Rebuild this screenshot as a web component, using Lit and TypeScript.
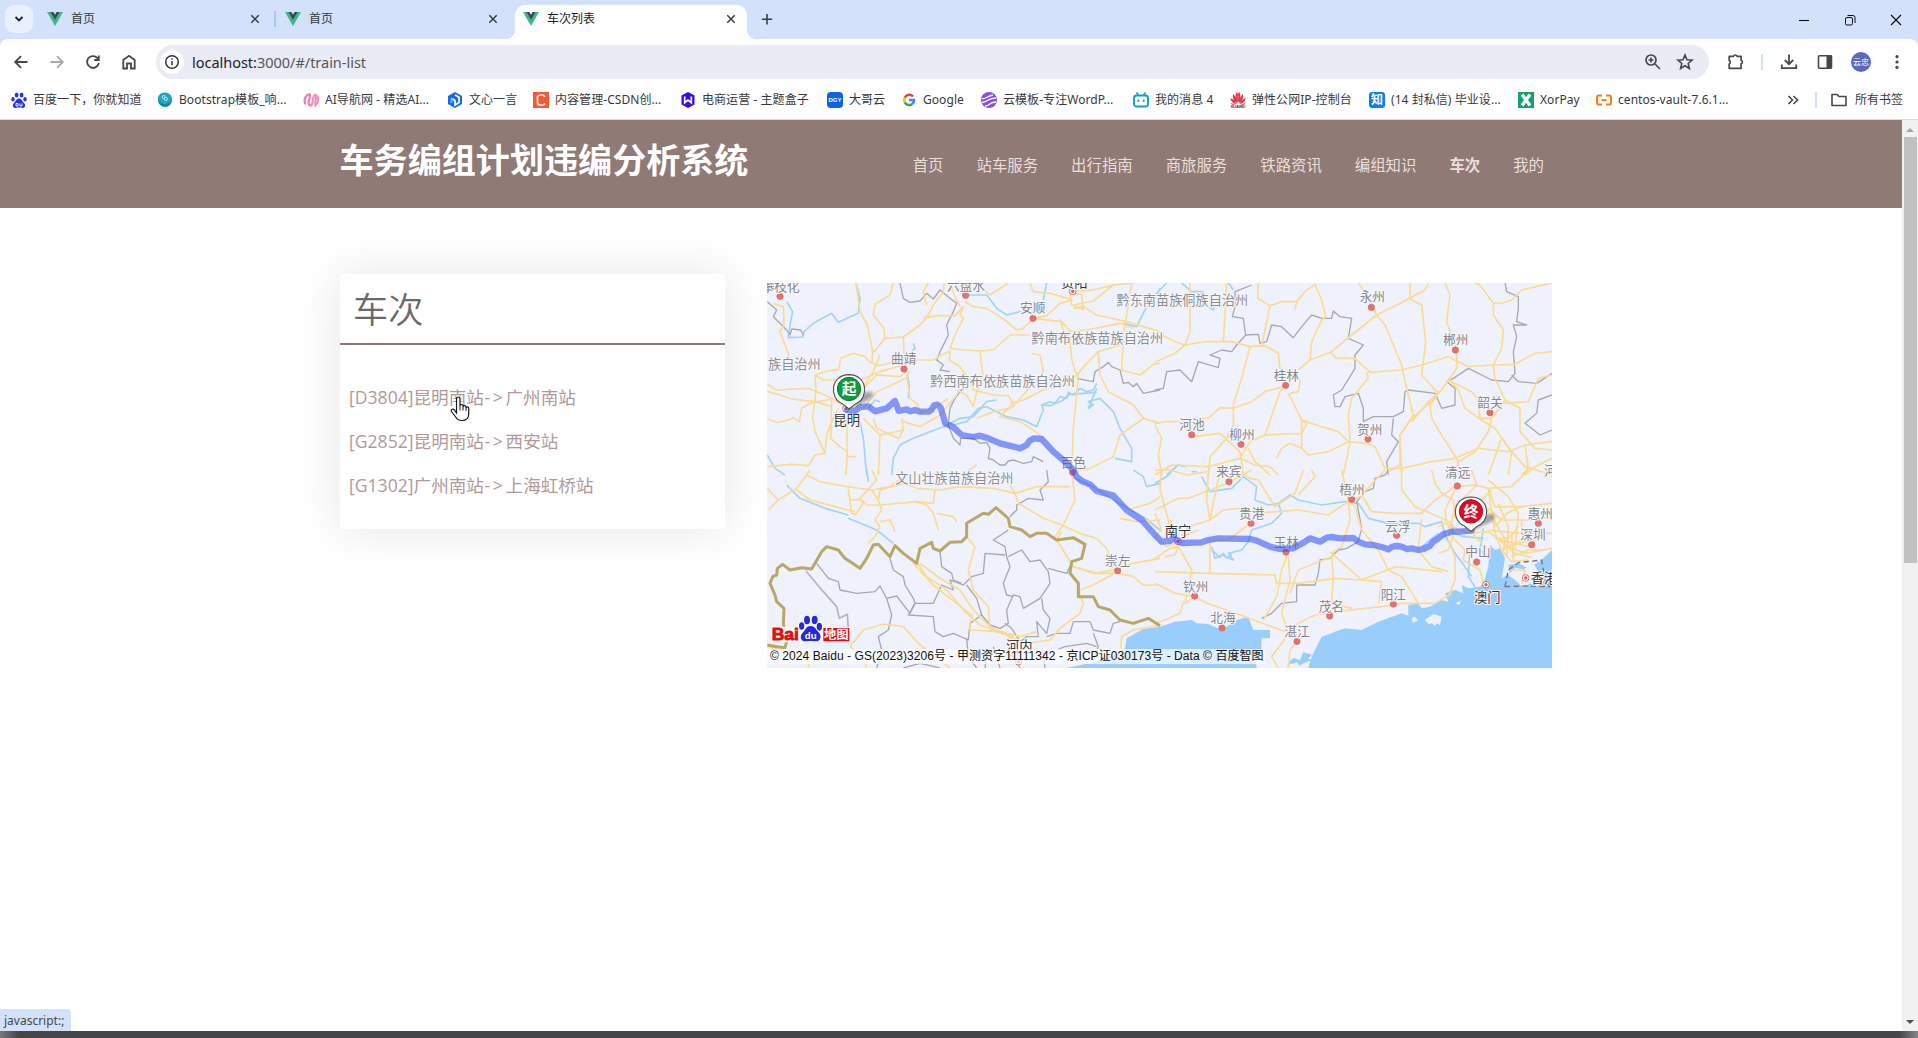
import { LitElement, html, svg, css } from "lit";
import { customElement } from "lit/decorators.js";

const vue = svg`<path d="M0 1h3.6L8 8.6 12.4 1H16L8 15z" fill="#41b883"/><path d="M3.4 1h3L8 3.8 9.6 1h3L8 9z" fill="#35495e"/>`;
const paw = svg`<g fill="#2932e1"><ellipse cx="5.6" cy="3" rx="1.9" ry="2.6"/><ellipse cx="10.6" cy="3" rx="1.9" ry="2.6"/><ellipse cx="2" cy="7.2" rx="1.7" ry="2.3"/><ellipse cx="14" cy="7.2" rx="1.7" ry="2.3"/><path d="M8 6.5c2.500 0 3 2.500 5 4.500s1.200 5-1.500 5c-1.500 0-2-.4-3.500-.4s-2 .4-3.500.4C1.800 16 1 13 3 11s2.500-4.500 5-4.500z"/></g><path d="M5 11.500h2v2.500H5zM9 11.500v2.500h2v-2.500" fill="none" stroke="#fff" stroke-width=".9"/>`;

const icons: Record<string, unknown> = {
  paw,
  boot: svg`<circle cx="8" cy="8" r="7" fill="#0d87a5"/><path d="M1 5.500A7.300 7.300 0 0 1 15 6c-1 4-4 6-7.500 6S2 9.500 1 5.500z" fill="#22a5bd"/><g fill="none" stroke="#b6f0fa" stroke-width=".9"><circle cx="6.700" cy="5" r="1.600"/><circle cx="8.800" cy="7" r="1.600"/></g>`,
  ai: svg`<g fill="none" stroke-width="2.200" stroke-linecap="round"><path d="M2.200 11.500C.5 7 3 3 6 2.200c2 0 .3 4-.3 7-.4 3 .5 4.500 2.300 4.300" stroke="#f07ab4"/><path d="M8 13.500c2-1 1.500-4 2-7 .6-4 3.600-5 3.200-2 0 3-1.500 6-.8 9 2.600-2 3.300-6 2.200-9" stroke="#f58fbd"/></g>`,
  yiyan: svg`<path d="M8 0l7 4v8l-7 4-7-4V4z" fill="#1768e5"/><path d="M8 3l4 2.300v5.200L8 13V8.500L4.500 6.500" fill="none" stroke="#fff" stroke-width="1.700"/><path d="M4.500 6v5" stroke="#49c4ff" stroke-width="2"/>`,
  csdn: svg`<path d="M0 0h16v16H0z" fill="#fc5531"/><path d="M11.500 5V4Q11 3 8 3T4.500 5v6q0 2 3.500 2t3.500-1v-1" fill="none" stroke="#fff" stroke-width="1.700"/>`,
  box: svg`<path d="M8 0l6.500 3.500v9L8 16l-6.500-3.500v-9z" fill="#3909ea"/><path d="M4.700 4.500v6.200L8 8l3.300 2.700V4.500" fill="none" stroke="#fff" stroke-width="1.700"/>`,
  dgy: svg`<rect width="16" height="16" rx="4" fill="#0964e4"/><text x="8" y="10.200" text-anchor="middle" font-family="Liberation Sans" font-weight="700" font-size="6" fill="#fff">DGY</text>`,
  google: svg`<g fill="none" stroke-width="2.500"><path d="M12 4.500A5 5 0 0 0 3.700 5.700" stroke="#ea4335"/><path d="M3.700 5.700a5 5 0 0 0 0 4.600" stroke="#fbbc05"/><path d="M3.700 10.300A5 5 0 0 0 11.300 12" stroke="#34a853"/><path d="M11.300 12A5 5 0 0 0 13 8H8" stroke="#4285f4"/></g>`,
  cloud: svg`<circle cx="8" cy="8" r="8" fill="#864eea"/><path d="M1 6.500c4 1 5-2.500 11-3.500M1 10.500c6 0 5-4.500 14-4.500M4 14c5 0 4-4 11-4" fill="none" stroke="#fff" stroke-width="1.300"/>`,
  bili: svg`<rect x="1" y="3.500" width="14" height="11" rx="2.500" fill="#fff" stroke="#139fc6" stroke-width="1.900"/><path d="M3.500.5l2 3M12.500.5l-2 3M5.300 7.500v2.500M10.700 7.500v2.500" stroke="#139fc6" stroke-width="1.700"/>`,
  huawei: svg`<g fill="#e43b4c"><path d="M7.600 11C5 6 5 2 7 0c1.500 2 1.500 6 .6 11zM8.400 11C11 6 11 2 9 0 7.500 2 7.500 6 8.400 11zM7 11.500C3.500 8.500 2 5 3.200 2 5.500 4 6.700 7.500 7 11.500zM9 11.500c3.500-3 5-6.500 3.800-9.500C10.500 4 9.300 7.500 9 11.500zM6.500 12C3 11.500.5 9 .5 6c3 1 5 3.500 6 6zM9.500 12c3.500-.5 6-3 6-6-3 1-5 3.500-6 6zM6 12.700H2C1 12 1 11 1 11zM10 12.700h4c1-.7 1-1.700 1-1.700z"/></g><text x="8" y="16" text-anchor="middle" font-family="Liberation Sans" font-size="3.600" font-weight="700" fill="#333">HUAWEI</text>`,
  zhi: svg`<rect width="16" height="16" rx="3" fill="#0d7ff2"/><text x="8" y="12.300" text-anchor="middle" font-family="Noto Sans CJK SC" font-weight="700" font-size="12" fill="#fff">知</text>`,
  xor: svg`<path d="M0 0h16v16H0z" fill="#17a26b"/><path d="M4 2.500l8 11M12 2.500l-8 11" stroke="#fff" stroke-width="3.200"/>`,
  ali: svg`<path d="M6 3.500H3Q1 3.500 1 5.500v5q0 2 2 2h3M10 3.500h3q2 0 2 2v5q0 2-2 2h-3M5.500 8h5" fill="none" stroke="#ff7a13" stroke-width="2"/>`,
  folder: svg`<path d="M1 13.500v-11h5l2 2h7v9z" fill="none" stroke="#45474a" stroke-width="1.600" stroke-linejoin="round"/>`,
};
const icon = (n: string) => html`<svg class="i16" viewBox="0 0 16 16">${icons[n]}</svg>`;

const bookmarks: [string, string][] = [
  ["paw", "百度一下，你就知道"], ["boot", "Bootstrap模板_响..."], ["ai", "AI导航网 - 精选AI..."],
  ["yiyan", "文心一言"], ["csdn", "内容管理-CSDN创..."], ["box", "电商运营 - 主题盒子"],
  ["dgy", "大哥云"], ["google", "Google"], ["cloud", "云模板-专注WordP..."],
  ["bili", "我的消息 4"], ["huawei", "弹性公网IP-控制台"], ["zhi", "(14 封私信) 毕业设..."],
  ["xor", "XorPay"], ["ali", "centos-vault-7.6.1..."],
];

const glyph = (w: number, body: unknown) => html`<svg class="glyph" width=${w} height=${w} viewBox="0 0 20 20">${body}</svg>`;
const closeGlyph = html`<svg class="close" width="16" height="16" viewBox="0 0 16 16"><path d="M4.300 4.300l7.400 7.400M11.700 4.300l-7.400 7.400" stroke="#3a3c40" stroke-width="1.500"/></svg>`;

/* Map geometry is kept per tile; each tile is 1185 x 585 units, three units to a pixel. */
type Tile = { x: number; y: number; roads: string[]; rivers: string[]; borders: string[] };
const tiles: Tile[] = [
  { x: 0, y: 0,
    roads: [
      "288 24 300 110 322 150 338 230 336 262", "400 24 390 60 345 88 340 120 372 160 375 190 345 228 338 230",
      "375 190 430 186 480 150 500 128 520 90 550 50 552 24", "490 128 540 122 585 122 610 95", "430 186 432 232 440 270",
      "58 165 75 210 90 250", "40 85 70 95 72 150 60 170", "22 328 50 345 145 340 175 352 215 370 260 400",
      "22 350 55 358 95 372 165 380 215 395", "22 432 50 442 75 438 100 428 118 440 125 400 150 385 215 372",
      "165 300 200 288 235 284 242 250 280 235 315 245 330 262 360 272 420 255 520 255 545 240 570 228",
      "165 300 168 350 158 430 165 470 195 535 200 480 215 440 235 400", "195 535 165 540 145 572 95 568 22 575",
      "215 375 212 490 240 515 262 530 258 600", "260 430 262 545 288 545", "290 400 300 350 330 320 350 300 420 305 438 290",
      "310 400 350 350 395 330 440 308 448 290", "440 300 450 370 470 385 485 415", "360 240 340 290 310 335 300 400",
      "165 300 190 315 300 315 360 290 430 270", "610 95 600 120 610 130 585 180 570 220 610 225 660 228 700 225 750 180 810 180",
      "615 80 640 95 680 100 735 135 770 165 790 160 820 130 860 122 900 85 935 75", "570 228 568 256 600 275 625 310 640 345 700 360 745 362 760 385 720 425 780 440 820 465 850 490",
      "660 228 668 300 650 350 640 395 620 360 590 345", "900 130 910 170 930 200 935 250 945 290 955 300 940 460 935 600",
      "940 75 870 55 820 50 810 24", "930 50 1000 45 1060 30", "940 90 1000 78 1060 30 1120 24", "940 100 970 95 1010 120 1100 140 1200 170",
      "820 130 905 140 930 168 980 165 1080 145 1120 160", "430 440 480 455 540 420 590 360", "360 480 355 600", "310 430 360 480 430 465 425 430",
      "340 430 350 460 415 490 430 465", "750 385 790 375 850 345 910 330 950 300 980 265 1015 230 1080 210 1090 180 1115 24",
      "815 235 840 240 850 290 790 360 755 400", "1015 230 1020 300 1045 350 1120 390 1150 430 1200 445", "1150 430 1080 480 1060 545 990 580 930 590",
      "1090 190 1085 285 1140 300 1180 268 1200 265", "565 370 520 400 480 415", "500 90 490 50 505 24", "600 95 585 65 570 24",
      "650 24 690 60 745 24", "930 50 935 90 970 105 965 60 935 50", "930 168 920 195 1010 185 1100 190", "750 400 700 410 650 430", "620 590 650 570",
    ],
    rivers: ["80 80 98 110 90 150 85 188 128 186 132 170 160 145 215 115 235 142 295 115 300 70 288 24", "620 60 680 60 710 100 740 120 780 110 790 120", "860 24 850 75",
      "22 540 45 580 75 600", "300 440 310 490 320 600", "395 600 400 550 420 510 460 490 550 455 600 430 640 425 680 380 710 375", "360 380 345 375 325 400",
      "445 370 448 330 442 300", "460 205 465 220 455 230", "580 450 620 440 655 400 680 395 740 425 790 435 830 455 850 405 845 390 870 380 885 385 900 365 920 370 925 352 940 360 960 340 980 350 1000 345 1010 325",
      "1010 340 985 400 1000 390 985 380 1020 370 1060 410 1080 460 1115 520 1115 560 1065 550", "845 390 870 392 905 378 930 358 1010 352", "1160 95 1130 155 1090 145", "1200 40 1180 80"],
    borders: ["22 80 50 105 40 125 60 145 80 165 90 180 95 162 122 165 130 180", "420 24 430 70 450 82 480 78 500 55 520 72 540 45 570 70 590 85 580 110 560 150 565 180 545 220 530 255 550 270 540 285 570 290",
      "615 335 600 350 585 370 570 400 565 450 580 490 600 510 602 490 640 490 660 505 680 502 690 520 685 550 700 555 720 570 735 570 745 558 760 555 790 565 815 560 820 545 850 560",
      "950 310 1000 320 1005 290 1030 275 1045 262 1055 275 1080 285 1090 325 1105 322 1120 335 1130 325 1150 355 1200 345"] },
  { x: 1185, y: 0,
    roads: [
      "105 24 105 170 90 210 60 235 0 262", "20 180 60 200 90 210 150 200 230 200 285 215 330 212 370 235 375 280", "215 24 210 120 205 200",
      "310 24 308 70 345 92 330 165 320 212", "345 92 380 80 425 80 450 50 480 28 500 75 512 125 500 135 470 200 465 255 430 285",
      "425 80 420 105", "465 255 530 230 590 180 665 120 745 80 810 45 820 24", "610 24 625 45 665 120 690 150 740 270 750 320 775 420 735 480 740 600",
      "525 230 545 250 600 250 645 292 740 285 800 270 880 245 940 275 1015 270 1080 268 1140 235 1191 230", "765 24 765 72 800 90 812 200 800 300 850 355",
      "870 24 885 60 875 140 905 225 905 280 860 345 820 380 770 440", "960 24 975 30 1015 85 1015 120 1045 165 1040 220 1015 270 1020 310 1050 375 1095 400 1095 470 1140 520 1191 525",
      "1191 24 1100 45 1070 75 1040 85 1015 85", "285 215 260 310 235 390 235 450 215 490 165 545 160 600", "385 335 375 350 330 480 285 500 255 550",
      "385 335 330 350 290 380 235 400 195 398 160 430 130 430", "400 355 440 435 500 455 550 470 580 500 635 505 660 515 690 580 740 580 830 560 900 550 970 520 1060 530 1110 510 1191 500",
      "405 355 430 350 435 320 420 290", "0 445 35 440 75 440 115 485 195 475 255 530 265 600", "330 480 440 475 455 445 440 435 440 520 460 540 520 530 580 500",
      "0 450 20 490 10 540 20 600", "440 520 405 505 380 520 365 550", "635 292 640 310 590 370 580 420 585 500 565 600",
      "850 355 825 390 830 430 860 480 905 550 920 600", "880 310 910 345 930 400 980 435 1020 460 1070 530 1110 575 1191 600", "1050 375 1010 430 1000 470 960 530 910 560 900 600",
      "890 320 950 350 975 380 1050 385 1120 380 1150 310 1191 300", "255 550 300 570 345 575 370 600", "0 600 50 570 160 575 255 550", "1000 600 1040 490 1070 530 1060 600",
      "700 590 735 570 735 480 770 430 840 370", "970 385 975 430 1010 430", "280 520 300 560 345 600", "1110 510 1120 580 1100 600", "1191 550 1140 575 1110 600"],
    rivers: ["0 60 35 24", "80 24 110 50 145 50 130 75", "150 90 175 105 180 90", "35 600 70 570 90 575", "220 24 235 45", "110 590 125 590"],
    borders: ["290 30 265 40 240 50 240 95 232 125 265 130 272 180 245 210 230 230 200 225 165 240 195 250 190 278 130 260 110 320 75 285 35 290 25 340 0 345",
      "270 180 310 178 315 205 335 200 350 150 380 155 415 188 440 155 470 120 500 130 530 130 535 108 555 125 590 130 580 190 625 210 600 240 600 280 560 345 535 360 540 395 555 395 570 365 610 355 625 400 625 440 655 425 715 425 745 410 750 350 760 345 840 355 860 400 900 390 900 340 875 320 895 310 940 280 980 300 1010 315 1060 320 1080 295 1075 230 1085 185 1075 150 1115 150 1085 140 1090 100 1090 65 1055 50 1050 24",
      "1070 300 1090 320 1145 325 1191 295", "715 430 710 480 730 500 695 560 700 600", "1191 360 1150 375 1145 415 1110 445 1155 480 1191 465"] },
  { x: 0, y: 585,
    roads: ["22 55 55 90 25 120", "55 90 110 55 140 15 150 0", "110 60 150 90 225 110 285 125", "140 15 180 35 260 50 335 60 355 90 360 60 430 40 470 55 540 60 600 50 700 55 765 70",
      "265 55 270 90 300 88 310 100 285 135 275 130 265 60", "355 90 365 120 345 150 360 170 345 200 325 220", "360 155 390 150 405 185", "335 0 350 30 300 85 320 105 360 105", "360 105 470 95 520 100 525 60",
      "465 95 500 105 520 130 535 180", "530 130 580 140 590 155", "735 20 765 70 775 100 850 145 905 165 960 190 1010 205 1040 235 1060 295", "935 0 945 90 910 165 885 200",
      "905 185 890 210 940 290 1000 310 1060 300 1120 280 1200 265", "940 290 1010 310 1065 310 1000 345 960 360", "1080 310 1120 320 1150 345 1200 345", "470 275 500 320 560 360 620 430 660 465 740 490 760 520",
      "480 280 540 325 600 360 640 420 690 470 780 515", "460 280 520 345 590 400 640 440", "620 200 645 230 625 300 640 360 685 410 690 480 760 500", "270 530 310 480 370 462 430 470 475 520 570 594",
      "22 530 60 540 100 555", "955 360 970 400 960 430 900 475 870 510 800 520", "1080 560 1085 500 1120 480 1200 465", "1080 145 1130 155 1200 150", "1100 120 1170 100 1200 80", "150 540 145 594", "270 530 310 560 320 594",
      "335 60 390 50 430 20", "630 450 630 480 720 485 780 500 830 485", "765 70 830 50 930 50"],
    rivers: ["80 45 120 85 195 115 265 135", "265 145 350 180 400 220", "320 0 325 35", "1120 0 1150 20 1160 50 1200 40", "935 20 1000 50 1060 90 1150 140 1200 180"],
    borders: ["860 0 865 35 840 60 850 90 805 85 770 105 770 120 750 140", "170 280 205 325 235 335 240 360 290 370 345 365 360 348 380 385 410 378 450 430 465 400 520 400 545 345 580 360 570 330 610 345 635 320 670 310 675 250 735 255",
      "390 265 400 300 430 320 435 345 460 385 465 400", "540 245 545 290 575 310 580 330 605 340", "380 385 395 435 385 480 355 500 365 540 350 594", "465 400 445 435 520 440 525 485 550 500 580 490 625 510 630 460 665 435 690 465 720 475 745 460 740 420 760 375 780 380 790 415 840 385 870 340 865 305 840 270 810 275 785 240 745 260",
      "745 180 700 210 735 230 740 260 750 290 730 340 740 375 760 380", "620 345 650 385 665 435", "865 295 920 310 935 280", "845 385 850 420 870 445 860 490 830 455 835 500 800 500 780 515 755 475 735 460", "620 505 625 560 650 594", "860 500 890 490 930 490 940 455 990 455 1000 480 1050 490 1060 460 1080 455",
      "1000 490 1015 530 1000 570", "890 540 915 530 980 520 1010 530", "700 530 720 594", "850 540 855 594", "430 594 480 580 540 594", "675 594 680 550 720 540 760 560 780 594"] },
  { x: 1185, y: 585,
    roads: ["0 200 35 230 65 220 100 170 165 150 205 120 250 115 285 125", "20 0 15 60 40 150 45 200", "160 0 155 90 165 150 195 0", "0 120 70 85 100 85 165 60 215 40 290 0",
      "245 0 285 25 310 30 360 110 420 70 445 0", "430 75 480 20 470 0", "285 160 220 210 165 210 165 310 0 305", "65 220 110 300 90 400 120 380", "165 310 360 315 365 340 430 340 540 325 620 330 720 290 860 305",
      "400 245 380 300 365 380 325 450", "400 260 405 330 380 430 400 490", "120 380 155 400 200 415 270 440 350 470 405 490 430 460 480 435 585 420 680 410 740 400 840 400 890 370",
      "0 265 45 235 70 230 60 255 30 260", "120 380 60 370 0 340", "85 395 75 430 30 450 0 460", "430 120 520 135 580 95 615 80 690 0", "580 95 585 150 560 230 530 250 535 320 530 400 590 415",
      "560 0 580 90 600 110 620 180 670 240 700 300 740 320 790 400", "620 75 650 125 720 130 800 130 840 90 880 65 905 45", "740 0 740 60 780 110 850 140 890 160", "800 145 790 240 830 290 880 305",
      "905 50 870 120 875 160 895 200 880 240 850 250", "905 50 960 45 1000 55 1070 50 1120 0", "1000 55 1020 110 1100 110 1191 100", "950 0 965 45 900 110 880 200", "830 0 840 40 860 70 895 90 900 145", "850 170 870 160 940 190 1000 185 1060 230 1110 250 1191 235",
      "1000 60 1020 190 1040 240 1070 275 1120 270", "1000 115 1040 150 1130 150 1191 140", "1020 170 1055 130 1100 110", "1000 180 1090 190 1191 190", "1020 205 1120 230 1160 190", "1040 240 1100 210 1100 150", "890 200 930 240 925 270 975 300 985 340",
      "880 210 900 260 900 330 880 380", "1000 30 1060 80 1090 130 1080 240", "1030 100 1060 170 1055 260", "1010 60 980 90 1010 145 1020 170", "1025 205 1060 205 1090 170", "1070 260 1120 240 1160 240", "1050 230 1130 210", "1060 300 1110 300 1100 340",
      "1015 145 1035 185 1050 205 1045 245", "1070 190 1075 270", "1040 215 1080 250 1130 262", "960 100 940 150 960 200 1000 240",
      "300 130 430 120", "525 245 620 330 680 335 670 400", "405 490 440 500 405 540 400 594", "400 490 380 520 350 560 370 594", "530 260 430 300 405 370", "0 200 20 180 0 130", "45 150 60 210 130 180", "0 0 40 0 100 15 155 5"],
    rivers: ["0 40 35 20 55 0", "140 20 165 65 230 55 265 20 305 50 300 90 340 105 370 100 380 130 350 160 290 180 280 215 260 240 220 250 235 270 200 255 180 265 170 230", "170 240 195 262 205 250 215 265 230 252", "370 100 405 75 430 90 500 105 570 95 610 100 640 145 700 160 790 160 810 170 860 155 870 195 900 250 930 290 950 320",
      "800 230 850 190", "985 175 975 240 1000 260", "945 230 940 320 960 350", "890 160 895 190 925 200 985 205"],
    borders: ["700 0 690 15 660 25 655 55 630 65 605 95 620 175 610 215 575 235 550 240 525 265 495 270 490 310 480 345 425 345 425 395 380 400 350 430 320 445"] },
];

const labels: [string, number, number, string?][] = [
  ["攀枝化", 62, 49], ["六盘水", 618, 46], ["贵阳", 943, 35, "major"], ["安顺", 818, 112], ["黔东南苗族侗族自治州", 1267, 89, "area"],
  ["黔南布依族苗族自治州", 1012, 205, "area"], ["曲靖", 431, 263], ["族自治州", 103, 283, "area"], ["黔西南布依族苗族自治州", 728, 333, "area"], ["昆明", 260, 449, "major"],
  ["百色", 940, 575], ["文山壮族苗族自治州", 583, 624, "area"], ["崇左", 1073, 870], ["河内", 778, 1127, "major"],
  ["永州", 1837, 79], ["郴州", 2087, 207], ["桂林", 1579, 314], ["河池", 1296, 461], ["柳州", 1446, 492], ["贺州", 1829, 477], ["韶关", 2190, 397],
  ["来宾", 1407, 604], ["清远", 2093, 605], ["河源", 2390, 601], ["梧州", 1776, 657], ["贵港", 1475, 728], ["云浮", 1914, 767], ["惠州", 2341, 728], ["深圳", 2319, 793],
  ["南宁", 1254, 782, "major"], ["玉林", 1579, 815], ["中山", 2154, 844], ["钦州", 1307, 947], ["阳江", 1900, 972], ["茂名", 1714, 1008], ["北海", 1389, 1042], ["湛江", 1611, 1083],
  ["香港", 2352, 924, "major"], ["澳门", 2182, 980, "major"],
];
const dots: [number, number][] = [[60, 64], [617, 61], [819, 130], [432, 282], [938, 592], [1073, 887], [1834, 97], [2086, 225], [1577, 331], [1295, 479], [1443, 508], [1824, 492], [2190, 413], [1407, 620], [2092, 633], [1775, 673], [1473, 745], [1910, 781], [2335, 745], [2315, 809], [1578, 831], [2150, 861], [1304, 963], [1900, 987], [1709, 1023], [1386, 1059], [1611, 1099]];
const capitals: [number, number][] = [[938, 49], [258, 401], [1254, 799], [2178, 929], [2297, 909], [775, 1160]];
const routePts = "262 405 285 408 300 396 325 394 345 409 380 400 405 378 416 408 440 403 450 409 465 405 480 410 505 410 515 404 522 391 532 389 542 398 556 445 578 455 605 480 640 486 660 482 685 490 720 505 780 520 800 510 808 498 822 490 845 492 880 530 915 560 940 585 950 605 965 618 990 628 1010 648 1060 662 1100 705 1145 735 1185 780 1205 800 1230 798 1240 790 1265 804 1325 802 1345 795 1375 790 1470 792 1490 797 1530 815 1560 822 1600 820 1635 800 1650 790 1680 800 1700 788 1715 786 1740 790 1780 789 1795 800 1815 808 1840 810 1865 816 1885 823 1897 815 1910 813 1925 815 1940 822 1955 820 1975 825 1990 822 2008 814 2020 800 2032 792 2050 778 2075 770 2100 770 2135 766";

const pin = (x: number, y: number, fill: string, rim: string, text: string) => svg`<g transform="translate(${x} ${y})">
  <path d="M0 0C20-20 20-50 65-52 85-45 60-25 35-18z" fill="#555" opacity=".5" filter="url(#soft)"/>
  <path d="M0 0L-20-16C-60-32-57-102 0-103 57-102 60-32 20-16z" fill="#fff" stroke="#555" stroke-width="3.500"/>
  <circle cx="0" cy="-60" r="35" fill=${fill} stroke=${rim} stroke-width="3"/>
  <text class="pintext" x="0" y="-44" text-anchor="middle">${text}</text></g>`;

@customElement("train-map")
class TrainMap extends LitElement {
  static styles = css`
    :host { display: block; position: relative; width: 785px; height: 385px; overflow: hidden; }
    .map { display: block; }
    polyline, path { stroke-linejoin: round; }
    .road { fill: none; stroke: #fbdb8f; stroke-width: 5; }
    .river { fill: none; stroke: #a3d3f7; stroke-width: 5; }
    .border { fill: none; stroke: #a6a8b2; stroke-width: 4; }
    .label { font: 38px "Noto Sans CJK SC", sans-serif; fill: #85868b; stroke: #f7f8fd; stroke-width: 6; paint-order: stroke; text-anchor: middle; }
    .major { font-size: 40px; fill: #333; }
    .area { font-size: 39.5px; fill: #8d8e93; }
    .route { fill: none; stroke: #3050f8; stroke-opacity: .57; stroke-width: 19; stroke-linecap: round; }
    .pintext { font: 700 44px "Noto Sans CJK SC", sans-serif; fill: #fff; }
    .brand { font: 900 52px "Liberation Sans", sans-serif; fill: #e10c14; stroke: #e10c14; stroke-width: 2.5; }
    .copy { position: absolute; left: 0; bottom: 4px; height: 15px; padding: 0 1px 0 3px; background: rgba(255,255,255,.7); color: #111; font: 12px/15px "Liberation Sans", "Noto Sans CJK SC", sans-serif; letter-spacing: .065px; white-space: nowrap; }
  `;
  render() {
    const lines = (list: string[], cls: string) => list.map((p) => svg`<polyline class=${cls} points=${p}/>`);
    return html`<svg class="map" width="785" height="385" viewBox="21 24 2355 1155">
      <defs><filter id="soft" x="-50%" y="-50%" width="200%" height="200%"><feGaussianBlur stdDeviation="5"/></filter></defs>
      <rect x="21" y="24" width="2355" height="1155" fill="#eff2fc"/>
      <path fill="#99cdfb" d="M920 1179L1000 1162 1060 1140 1095 1120 1100 1090 1150 1062 1200 1055 1245 1040 1295 1035 1310 1045 1345 1047 1385 1065 1430 1035 1465 1025 1480 1065 1530 1065 1530 1090 1505 1090 1503 1135 1485 1145 1490 1179zM1645 1179L1655 1145 1675 1105 1685 1085 1715 1075 1730 1068 1755 1060 1805 1065 1855 1040 1925 1015 1945 1022 1945 990 1975 985 1985 1000 2010 995 2045 975 2065 980 2055 955 2085 945 2110 955 2105 930 2125 940 2160 935 2172 920 2185 875 2190 810 2205 825 2220 820 2235 850 2225 910 2250 895 2245 870 2275 865 2305 880 2330 865 2350 850 2376 825V1179z"/>
      <path fill="#99cdfb" d="M1580 1170l20-22 20 8 10-25 25 8-10 12 12 5-20 6-20 10-5-10z"/>
      <path fill="#eff2fc" d="M2245 900l20-22 25 5 30-18 15 25 25 20-30 25-20-10-20 13-25-23zM1955 1030l10-5 8 12-15 6zM1995 1035l25-18 25 8-5 25-10-5-5 8-10-8-10 3zM2085 985l18-8-5 13zM2140 978l12-6 5 10-10 2z"/>
      ${tiles.map((t) => svg`<g transform="translate(${t.x} ${t.y})">${lines(t.rivers, "river")}${lines(t.borders, "border")}${lines(t.roads, "road")}</g>`)}
      <path d="M2235 935l10-50 30-22 70-8 10 60 15 20-70-2z" fill="none" stroke="#777" stroke-width="4" stroke-dasharray="16 10"/>
      <polyline points="138 888 190 950 230 995 238 1030 262 1018 268 1100" fill="none" stroke="#b5b6b1" stroke-width="5"/>
      <polyline points="22 1110 50 1115 75 1118 80 1100 70 1045 72 1000 50 980 45 960 30 925 38 905 50 900 52 880 68 868 90 885 125 878 155 882 185 830 200 815 235 825 255 850 300 880 320 850 340 810 355 808 390 845 405 812 430 835 470 865 480 820 515 802 520 820 540 828 570 802 605 800 620 785 620 745 670 715 685 718 708 698 745 730 750 755 785 765 810 785 830 775 860 775 890 795 940 788 975 808 965 850 935 860 930 895 955 925 955 965 1000 965 1015 995 1050 1005 1080 1035 1120 1045 1165 1030 1200 1052" fill="none" stroke="#b9a765" stroke-width="9" stroke-linejoin="round"/>
      ${dots.map(([x, y]) => svg`<circle cx=${x} cy=${y} r="9.500" fill="#e87068" stroke="#c96a63" stroke-width="2"/>`)}
      ${capitals.map(([x, y]) => svg`<circle cx=${x} cy=${y} r="10" fill="#fff" stroke="#dc6e68" stroke-width="3"/><circle cx=${x} cy=${y} r="5" fill="#df5c55"/>`)}
      ${labels.map(([t, x, y, c]) => svg`<text class="label ${c ?? ""}" x=${x} y=${y}>${t}</text>`)}
      <polyline class="route" points=${routePts}/>
      ${pin(267, 402, "#0c9c3c", "#087b2f", "起")}
      ${pin(2133, 769, "#dc0c27", "#b40b20", "终")}
      <g transform="translate(0 585)">
        <rect x="33" y="470" width="240" height="47" rx="4" fill="#fff" opacity=".85"/>
        <text class="brand" x="35" y="511" textLength="82" lengthAdjust="spacingAndGlyphs">Bai</text>
        <g stroke="#fff" stroke-width="5" paint-order="stroke" fill="#2529d8"><ellipse cx="141" cy="450" rx="9" ry="13"/><ellipse cx="164" cy="450" rx="9" ry="13"/><ellipse cx="125" cy="468" rx="8" ry="11"/><ellipse cx="178" cy="470" rx="8" ry="12"/><path d="M152 468c14 0 16 12 25 20s5 26-9 26c-8 0-10-1-16-1s-8 1-16 1c-15 0-18-16-8-26s10-20 24-20z"/></g>
        <text x="152" y="507" text-anchor="middle" font-family="Liberation Sans" font-size="29" font-weight="700" fill="#fff">du</text>
        <rect x="190" y="474" width="78" height="40" fill="#e10c14"/>
        <text x="229" y="508" text-anchor="middle" font-family="Noto Sans CJK SC" font-weight="700" font-size="37" fill="#fff">地图</text>
      </g>
    </svg>
    <div class="copy">© 2024 Baidu - GS(2023)3206号 - 甲测资字11111342 - 京ICP证030173号 - Data © 百度智图</div>`;
  }
}

@customElement("browser-chrome")
class BrowserChrome extends LitElement {
  static styles = css`
    :host { display: block; height: 120px; box-sizing: border-box; background: #d3e1fb; border-bottom: 1px solid #dfdedd; color: #37393c; font: 12px/16px "Noto Sans", "Noto Sans CJK SC", sans-serif; }
    svg { display: block; flex: none; }
    .i16 { width: 16px; height: 16px; }
    .tabs { display: flex; height: 39px; padding-left: 5px; align-items: center; }
    .search { width: 28px; height: 28px; border-radius: 9px; background: #e9f0fd; display: grid; place-items: center; margin-top: -1px; }
    .tab { box-sizing: border-box; display: flex; flex: none; align-items: center; gap: 8px; padding: 0 8px; height: 34px; width: 232px; margin-bottom: -5px; padding-bottom: 6px; }
    .first { margin-left: 6px; width: 235px; padding-right: 11px; }
    .second { margin-left: 1px; width: 236px; padding-right: 12px; }
    .close { margin-left: auto; }
    .sep { width: 2px; height: 16px; margin-top: -1px; background: #a9c7f3; flex: none; }
    .active { margin-left: 2px; background: #fff; border-radius: 10px 10px 0 0; color: #1c1d1f; position: relative; }
    .active::before, .active::after { content: ""; position: absolute; bottom: 0; width: 10px; height: 10px; }
    .active::before { left: -10px; background: radial-gradient(circle at 0 0, transparent 10px, #fff 10.5px); }
    .active::after { right: -10px; background: radial-gradient(circle at 100% 0, transparent 10px, #fff 10.5px); }
    .plus { margin-left: 12px; margin-top: -1px; }
    .win { margin-left: auto; display: flex; gap: 30px; padding-right: 14px; }
    .body { background: #fff; height: 80px; border-radius: 8px 8px 0 0; }
    .bar { display: flex; align-items: center; height: 46px; padding: 0 10px 0 11px; }
    .nav { display: flex; gap: 16px; }
    .omni { box-sizing: border-box; display: flex; flex: none; align-items: center; height: 34px; width: 1553px; margin-left: 17px; padding: 0 14px 0 4px; border-radius: 17px; background: #e9ecf5; }
    .info { width: 24px; height: 24px; border-radius: 50%; background: #fff; display: grid; place-items: center; }
    .url { margin-left: 8px; font-size: 14.5px; line-height: 20px; color: #54565a; letter-spacing: -.02px; }
    .host { color: #202124; }
    .omni-end { margin-left: auto; display: flex; gap: 12px; }
    .tools { display: flex; align-items: center; margin-left: 17px; }
    .vline { width: 2px; height: 16px; background: #d2e1fb; }
    .avatar { width: 20px; height: 20px; border-radius: 50%; background: #5b69bd; color: #fff; font-size: 8px; line-height: 20px; text-align: center; }
    .t1 { margin-right: 15px; } .t2 { margin-left: 16px; margin-right: 16px; } .t3 { margin-right: 16px; } .t4 { margin-left: 16px; }
    .marks { display: flex; height: 29px; align-items: center; padding-left: 11px; }
    .grid { display: grid; width: 1774px; flex: none; grid-template-columns: 146px 146px 144px 86px 147px 147px 74px 80px 152px 97px 139px 149px 78px 140px; }
    .mark { display: flex; gap: 6px; align-items: center; white-space: nowrap; letter-spacing: .06px; }
    .tail { display: flex; align-items: center; flex: none; }
    .all { display: flex; gap: 8px; align-items: center; margin-left: 14px; }
  `;
  render() {
    return html`
      <div class="tabs">
        <div class="search"><svg width="10" height="10" viewBox="0 0 10 10"><path d="M1.500 3L5 6.500 8.500 3" fill="none" stroke="#1f2022" stroke-width="1.800"/></svg></div>
        <div class="tab first"><svg class="i16" viewBox="0 0 16 16">${vue}</svg><span>首页</span>${closeGlyph}</div>
        <div class="sep"></div>
        <div class="tab second"><svg class="i16" viewBox="0 0 16 16">${vue}</svg><span>首页</span>${closeGlyph}</div>
        <div class="tab active"><svg class="i16" viewBox="0 0 16 16">${vue}</svg><span>车次列表</span>${closeGlyph}</div>
        <svg class="plus" width="16" height="16" viewBox="0 0 16 16"><path d="M8 3v10.500M2.800 8.200h10.400" stroke="#3c3e42" stroke-width="1.600"/></svg>
        <div class="win">
          <svg class="i16" viewBox="0 0 16 16"><path d="M3 8.500h10" stroke="#111" stroke-width="1.100"/></svg>
          <svg class="i16" viewBox="0 0 16 16"><rect x="3.500" y="5.500" width="7" height="7.500" rx="1.500" fill="none" stroke="#111"/><path d="M5.500 3.500H11q2 0 2 2V11" fill="none" stroke="#111"/></svg>
          <svg class="i16" viewBox="0 0 16 16"><path d="M3 3l10 10M13 3L3 13" stroke="#111" stroke-width="1.200"/></svg>
        </div>
      </div>
      <div class="body">
        <div class="bar">
          <div class="nav">
            ${glyph(20, svg`<path d="M16.500 10H4.500M10 4.200L4.200 10l5.800 5.800" fill="none" stroke="#45474a" stroke-width="1.800"/>`)}
            ${glyph(20, svg`<path d="M3.500 10h12M10 4.200L15.800 10 10 15.800" fill="none" stroke="#a9abae" stroke-width="1.800"/>`)}
            ${glyph(20, svg`<path d="M15.800 11A5.900 5.900 0 1 1 14.300 5.900L15.500 7.500M15.800 3.500v4.500h-4.500" fill="none" stroke="#45474a" stroke-width="1.800"/>`)}
            ${glyph(20, svg`<path d="M4.300 16.500V8L10 3.800 15.700 8v8.500H12v-5H8v5z" fill="none" stroke="#45474a" stroke-width="1.800"/>`)}
          </div>
          <div class="omni">
            <div class="info"><svg width="16" height="16" viewBox="0 0 16 16"><circle cx="8" cy="8" r="6.300" fill="none" stroke="#333" stroke-width="1.500"/><path d="M8 7v4.300M8 4.300v1.500" stroke="#333" stroke-width="1.500"/></svg></div>
            <div class="url"><span class="host">localhost:</span>3000/#/train-list</div>
            <div class="omni-end">
              ${glyph(20, svg`<circle cx="8" cy="8" r="5" fill="none" stroke="#45474a" stroke-width="1.700"/><path d="M12 12l5 5M8 5.500v5M5.500 8h5" stroke="#45474a" stroke-width="1.600"/>`)}
              ${glyph(20, svg`<path d="M10 3l2 4.700 5.100.4-3.900 3.400 1.200 5L10 13.800l-4.400 2.700 1.200-5-3.900-3.400 5.100-.4z" fill="none" stroke="#45474a" stroke-width="1.600"/>`)}
            </div>
          </div>
          <div class="tools">
            <div class="t1">${glyph(20, svg`<path d="M3.200 4.300h4.300a1.900 1.900 0 0 1 3.600 0h4v4a1.900 1.900 0 0 1 0 3.600v4.400H3.200v-4.200a2.100 2.100 0 0 0 0-3.700z" fill="none" stroke="#45474a" stroke-width="1.700" stroke-linejoin="round"/>`)}</div>
            <div class="vline"></div>
            <div class="t2">${glyph(20, svg`<path d="M10 2.500v9.500M5.800 8L10 12.200 14.200 8M2.800 12.500v3.700h14.400v-3.700" fill="none" stroke="#45474a" stroke-width="1.800"/>`)}</div>
            <div class="t3">${glyph(20, svg`<rect x="3.500" y="3.700" width="13" height="12.600" rx="1" fill="none" stroke="#45474a" stroke-width="1.600"/><path d="M11.500 3.500h5.500v13h-5.500z" fill="#45474a"/>`)}</div>
            <div class="avatar">云忠</div>
            <div class="t4">${glyph(20, svg`<g fill="#45474a"><circle cx="10" cy="4.700" r="1.600"/><circle cx="10" cy="10" r="1.600"/><circle cx="10" cy="15.300" r="1.600"/></g>`)}</div>
          </div>
        </div>
        <div class="marks">
          <div class="grid">${bookmarks.map(([i, t]) => html`<div class="mark">${icon(i)}<span>${t}</span></div>`)}</div>
          <div class="tail">
            <svg width="16" height="16" viewBox="0 0 16 16"><path d="M3.500 4l4 4-4 4M8.500 4l4 4-4 4" fill="none" stroke="#45474a" stroke-width="1.600"/></svg>
            <div class="all"><div class="vline"></div></div>
            <div class="all">${icon("folder")}<span>所有书签</span></div>
          </div>
        </div>
      </div>`;
  }
}

@customElement("app-root")
class AppRoot extends LitElement {
  static styles = css`
    :host { display: flex; flex-direction: column; width: 1918px; height: 1038px; overflow: hidden; position: relative; background: #fff; font-family: "Open Sans", "Noto Sans", "Noto Sans CJK SC", sans-serif; }
    .view { display: flex; height: 911px; }
    .page { width: 1902px; }
    .head { display: flex; justify-content: space-between; height: 88px; box-sizing: border-box; padding: 0 342px 0 339.500px; background: #8f7a76; }
    h1 { margin: 14px 0 0; font: 700 34.1px/48px "Noto Sans CJK SC", sans-serif; color: #fff; }
    nav { display: flex; gap: 33px; padding: 31.5px 16px 0 0; font: 15.4px/24px "Noto Sans CJK SC", sans-serif; color: #ebdfda; }
    .on { font-weight: 700; }
    main { display: flex; align-items: flex-start; gap: 42px; padding: 66px 0 0 340px; }
    .card { width: 385px; height: 255px; box-sizing: border-box; border-radius: 3px; background: #fff; box-shadow: 0 0 50px rgba(0,0,0,.1); }
    h2 { margin: 0; box-sizing: border-box; height: 71px; padding: 8px 0 0 13px; border-bottom: 2px solid #8f7a76; font: 350 35.2px/52px "Noto Sans CJK SC", sans-serif; color: #6a6a6a; }
    ul { list-style: none; margin: 0; padding: 30px 0 0 9px; font-size: 17.6px; line-height: 44px; color: #b1999a; }
    .arrow { letter-spacing: 2.6px; margin-left: .7px; }
    train-map { margin-top: 9px; }
    .scroll { width: 16px; background: #f1f1f1; display: flex; flex-direction: column; align-items: center; }
    .thumb { width: 13px; height: 426px; background: #c1c1c1; margin-top: 3px; }
    .up { margin-top: 6px; }
    .down { margin-top: auto; margin-bottom: 5px; }
    .edge { height: 7px; background: linear-gradient(90deg, #77797b, #45454a 1%, #45454a 99%, #85868a); }
    .status { position: absolute; left: 0; top: 1009px; height: 22px; width: 71px; box-sizing: border-box; padding-left: 4px; border-radius: 0 4px 0 0; background: #d3e1fb; color: #45474a; font: 12px/23px "Noto Sans", sans-serif; white-space: nowrap; }
    .cursor { position: absolute; left: 450px; top: 396px; }
  `;
  render() {
    const nav = ["首页", "站车服务", "出行指南", "商旅服务", "铁路资讯", "编组知识", "车次", "我的"];
    const trains = [["[D3804]昆明南站", "广州南站"], ["[G2852]昆明南站", "西安站"], ["[G1302]广州南站", "上海虹桥站"]];
    return html`
      <browser-chrome></browser-chrome>
      <div class="view">
        <div class="page">
          <header class="head"><h1>车务编组计划违编分析系统</h1>
            <nav>${nav.map((n) => html`<span class=${n === "车次" ? "on" : ""}>${n}</span>`)}</nav></header>
          <main>
            <section class="card"><h2>车次</h2><ul>${trains.map(([from, to]) => html`<li>${from}<span class="arrow">-&gt;</span>${to}</li>`)}</ul></section>
            <train-map></train-map>
          </main>
        </div>
        <div class="scroll">
          <svg class="up" width="8" height="8" viewBox="0 0 8 8"><path d="M0 6l4-4 4 4z" fill="#a3a3a3"/></svg>
          <div class="thumb"></div>
          <svg class="down" width="8" height="8" viewBox="0 0 8 8"><path d="M0 2l4 4 4-4z" fill="#505050"/></svg>
        </div>
      </div>
      <div class="edge"></div>
      <div class="status">javascript:;</div>
      <svg class="cursor" width="20" height="26" viewBox="0 0 20 26"><path d="M6.500 17V3q0-2 1.700-2T10 3v7q0-1.500 1.500-1.500T13 10v1q0-1.300 1.400-1.300T16 11v1q.2-1.200 1.300-1.200T18.700 12v6q0 6.500-7 6.500-4 0-6-3.500L1.500 15.500q-.8-1.800.7-2.300 1.300-.4 2.300 1z" fill="#fff" stroke="#15161c" stroke-width="1.200"/><path d="M10 10v4.500M13 11v3.500M16 12v3" stroke="#15161c"/></svg>`;
  }
}
